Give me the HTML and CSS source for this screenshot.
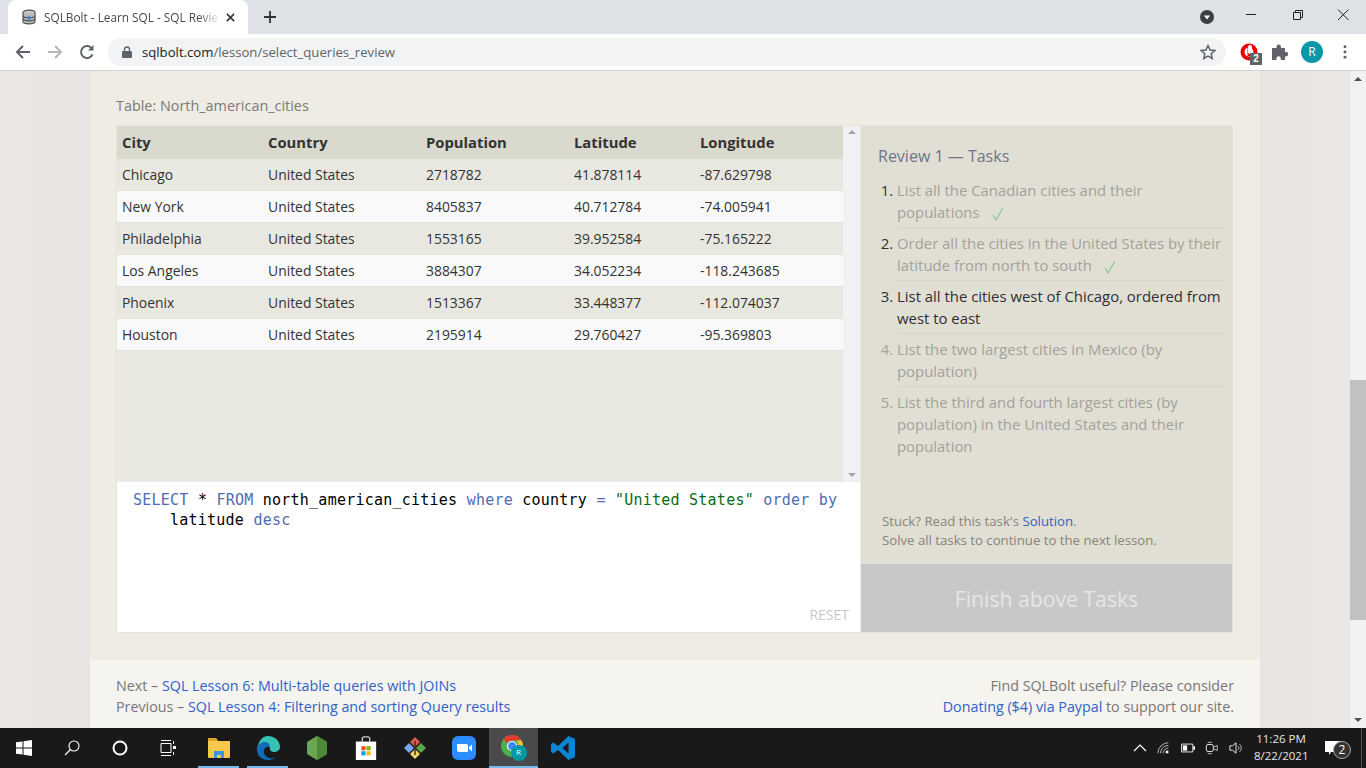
FILE: index.html
```html
<!DOCTYPE html>
<html>
<head>
    <title>SQLBolt - Learn SQL - SQL Review</title>
    <link rel="stylesheet" href="styles.css">
</head>
<body>
    <div class="tabstrip">
        <div class="tab">
            <svg class="favicon" viewBox="0 0 16 16"><ellipse cx="8" cy="3.500" rx="6" ry="2.300" fill="#ccc" stroke="#555" stroke-width="1.200"/><path d="M2 3.500v9c0 1.300 2.700 2.300 6 2.300s6-1 6-2.300v-9" fill="#bbb" stroke="#555" stroke-width="1.200"/><path d="M2 6.500c0 1.300 2.700 2.300 6 2.300s6-1 6-2.300M2 9.500c0 1.300 2.700 2.300 6 2.300s6-1 6-2.300" fill="none" stroke="#555" stroke-width="1.200"/><path d="M8 6.500l2.200 2.500H9v2.500H7V9H5.800z" fill="#3f7fd6"/></svg>
            <span class="tab-title">SQLBolt - Learn SQL - SQL Review</span>
            <svg class="tab-close" viewBox="0 0 10 10"><path d="M1 1l8 8M9 1l-8 8" stroke="#333" stroke-width="1.800"/></svg>
        </div>
        <svg class="new-tab" viewBox="0 0 12 12"><path d="M6 0v12M0 6h12" stroke="#333" stroke-width="1.800"/></svg>
        <div class="tab-spacer"></div>
        <svg class="profile-drop" viewBox="0 0 14 14"><circle cx="7" cy="7" r="7" fill="#3c4043"/><path d="M3.800 5.400h6.400L7 9.400z" fill="#fff"/></svg>
        <div class="win-buttons">
            <svg viewBox="0 0 46 30"><path d="M18 14.500h10" stroke="#222"/></svg>
            <svg viewBox="0 0 46 30"><path d="M19.500 12.500h7v7h-7zM21.500 12.500v-2h7v7h-2" fill="none" stroke="#222"/></svg>
            <svg viewBox="0 0 46 30"><path d="M18 9.500l10.500 10.500M28.500 9.500l-10.500 10.500" stroke="#222"/></svg>
        </div>
    </div>
    <div class="toolbar">
        <svg class="nav-icon" viewBox="0 0 16 16"><path d="M15 8H2M8 2L2 8l6 6" fill="none" stroke="#5f6368" stroke-width="2"/></svg>
        <svg class="nav-icon" viewBox="0 0 16 16"><path d="M1 8h13M8 2l6 6-6 6" fill="none" stroke="#b4b7bb" stroke-width="2"/></svg>
        <svg class="nav-icon" viewBox="0 0 16 16"><path d="M13.500 10.500A6 6 0 1 1 12.300 3.800" fill="none" stroke="#5f6368" stroke-width="2"/><path d="M14.500 1v5.500H9z" fill="#5f6368"/></svg>
        <div class="omnibox">
            <svg class="lock" viewBox="0 0 10 12"><path d="M2.500 5V3.500a2.500 2.500 0 0 1 5 0V5" fill="none" stroke="#5f6368" stroke-width="1.300"/><rect y="5" width="10" height="7" rx="1" fill="#5f6368"/></svg>
            <span class="url"><b>sqlbolt.com</b>/lesson/select_queries_review</span>
            <svg class="star" viewBox="0 0 16 16"><path d="M8 1.500l2 4.500 4.800.5-3.600 3.200 1 4.800L8 12.100l-4.200 2.400 1-4.800L1.200 6.500 6 6z" fill="none" stroke="#5f6368" stroke-width="1.500"/></svg>
        </div>
        <div class="ext-adblock">
            <svg viewBox="0 0 18 18"><circle cx="9" cy="9" r="6.500" fill="#fff" stroke="#e00" stroke-width="4"/><path d="M7.500 13V5a1.300 1.300 0 0 1 2.600 0v8z" fill="#e00"/><rect x="8" y="2" width="4" height="9" rx="2" fill="#fff"/></svg>
            <span class="ext-badge">2</span>
        </div>
        <svg class="ext-puzzle" viewBox="0 0 16 16"><path d="M0 4h4.500V2.800a2.200 2.200 0 1 1 4.400 0V4H13v4h1a2.200 2.200 0 1 1 0 4.400h-1V16H8.800v-1.500a2.200 2.200 0 1 0-4.400 0V16H0z" fill="#5f6368"/></svg>
        <span class="avatar">R</span>
        <svg class="menu-dots" viewBox="0 0 4 16"><circle cx="2" cy="2" r="1.700" fill="#5f6368"/><circle cx="2" cy="8" r="1.700" fill="#5f6368"/><circle cx="2" cy="14" r="1.700" fill="#5f6368"/></svg>
    </div>

    <div class="viewport">
        <div class="page">
            <div class="sheet">
                <div class="lesson">
                    <div class="table-label">Table: North_american_cities</div>
                    <div class="exercise">
                        <div class="left-col">
                            <div class="table-pane">
                                <div class="table-scroll">
                                    <table class="results">
                                        <tr><th class="c1">City</th><th class="c2">Country</th><th class="c3">Population</th><th class="c4">Latitude</th><th>Longitude</th></tr>
                                        <tr><td>Chicago</td><td>United States</td><td>2718782</td><td>41.878114</td><td>-87.629798</td></tr>
                                        <tr><td>New York</td><td>United States</td><td>8405837</td><td>40.712784</td><td>-74.005941</td></tr>
                                        <tr><td>Philadelphia</td><td>United States</td><td>1553165</td><td>39.952584</td><td>-75.165222</td></tr>
                                        <tr><td>Los Angeles</td><td>United States</td><td>3884307</td><td>34.052234</td><td>-118.243685</td></tr>
                                        <tr><td>Phoenix</td><td>United States</td><td>1513367</td><td>33.448377</td><td>-112.074037</td></tr>
                                        <tr><td>Houston</td><td>United States</td><td>2195914</td><td>29.760427</td><td>-95.369803</td></tr>
                                    </table>
                                </div>
                                <div class="pane-scrollbar">
                                    <span class="arrow-up"></span>
                                    <span class="arrow-down"></span>
                                </div>
                            </div>
                            <div class="editor">
                                <div class="code"><span class="kw">SELECT</span> * <span class="kw">FROM</span> north_american_cities <span class="kw">where</span> country <span class="kw">=</span> <span class="str">"United States"</span> <span class="kw">order by</span></div>
                                <div class="code code-indent">latitude <span class="kw">desc</span></div>
                                <div class="reset">RESET</div>
                            </div>
                        </div>
                        <div class="right-col">
                            <div class="task-title">Review 1 — Tasks</div>
                            <ol class="tasks">
                                <li class="done"><span>List all the Canadian cities and their populations</span><svg class="check" viewBox="0 0 12 14"><path d="M1 8l3 5L11 1" fill="none" stroke="#8ccb92" stroke-width="1.300"/></svg></li>
                                <li class="done"><span>Order all the cities in the United States by their latitude from north to south</span><svg class="check" viewBox="0 0 12 14"><path d="M1 8l3 5L11 1" fill="none" stroke="#8ccb92" stroke-width="1.300"/></svg></li>
                                <li><span>List all the cities west of Chicago, ordered from west to east</span></li>
                                <li class="todo"><span>List the two largest cities in Mexico (by population)</span></li>
                                <li class="todo"><span>List the third and fourth largest cities (by population) in the United States and their population</span></li>
                            </ol>
                            <div class="hint">
                                <div>Stuck? Read this task's <a>Solution</a>.</div>
                                <div>Solve all tasks to continue to the next lesson.</div>
                            </div>
                            <div class="finish">Finish above Tasks</div>
                        </div>
                    </div>
                </div>
                <div class="footer">
                    <div>
                        <div>Next – <a>SQL Lesson 6: Multi-table queries with JOINs</a></div>
                        <div>Previous – <a>SQL Lesson 4: Filtering and sorting Query results</a></div>
                    </div>
                    <div class="footer-right">
                        <div>Find SQLBolt useful? Please consider</div>
                        <div><a>Donating ($4) via Paypal</a> to support our site.</div>
                    </div>
                </div>
            </div>
        </div>
        <div class="page-scrollbar">
            <span class="arrow-up dark"></span>
            <div class="thumb"></div>
            <span class="arrow-down dark"></span>
        </div>
    </div>

    <div class="taskbar">
        <div class="tb-cell small"><svg viewBox="0 0 16 16"><path d="M0 2.300L6.500 1.400V7.500H0zM7.500 1.200L16 0V7.500H7.500zM0 8.500H6.500V14.600L0 13.700zM7.500 8.500H16V16L7.500 14.800z" fill="#fff"/></svg></div>
        <div class="tb-cell small"><svg viewBox="0 0 16 16"><circle cx="10" cy="6" r="5" fill="none" stroke="#fff" stroke-width="1.100"/><path d="M6.500 9.500L1 15" stroke="#fff" stroke-width="1.300"/></svg></div>
        <div class="tb-cell small"><svg viewBox="0 0 16 16"><circle cx="8" cy="8" r="6.500" fill="none" stroke="#fff" stroke-width="2"/></svg></div>
        <div class="tb-cell small"><svg viewBox="0 0 16 16"><path d="M1 .5h10M1 15.500h10M1 3.500h10v9H1z" fill="none" stroke="#fff"/><path d="M13.500 1v3M13.500 12v3" stroke="#fff"/><rect x="13" y="6" width="3" height="3" fill="#fff"/></svg></div>
        <div class="tb-cell wide open first-app"><svg viewBox="0 0 24 22"><path d="M1 1h8l2 3h12v16a1 1 0 0 1-1 1H2a1 1 0 0 1-1-1z" fill="#f6c84c"/><path d="M1 1h8l2 3H1z" fill="#dfa526"/><path d="M7 21v-7h10v7h-3v-3h-4v3z" fill="#3a96dd"/></svg></div>
        <div class="tb-cell wide open"><svg viewBox="0 0 24 24"><path d="M12 0c7 0 12 5 12 11 0 3-3 5-6 5-3 0-4-2-4-3 0-3-2-5-5-5-4 0-7 3-8 6C2 6 6 0 12 0z" fill="#36c3b5"/><path d="M1 14c0-5 4-8 8-8 3 0 5 2 5 5-4-1-7 2-6 6 1 4 6 7 12 4-2 2-5 3-8 3C6 24 1 20 1 14z" fill="#0f6cbd"/></svg></div>
        <div class="tb-cell wide"><svg viewBox="0 0 22 24"><path d="M11 0l10 6v12l-10 6-10-6V6z" fill="#6aa84f"/><path d="M11 0l10 6v12l-10 6z" fill="#4d8a3a"/></svg></div>
        <div class="tb-cell wide"><svg viewBox="0 0 24 26"><path d="M8 6V3a2 2 0 0 1 2-2h4a2 2 0 0 1 2 2v3" fill="none" stroke="#ccc" stroke-width="1.500"/><rect x="1" y="6" width="22" height="20" fill="#fff"/><rect x="7" y="11" width="4.500" height="4.500" fill="#f25022"/><rect x="12.500" y="11" width="4.500" height="4.500" fill="#7fba00"/><rect x="7" y="16.500" width="4.500" height="4.500" fill="#00a4ef"/><rect x="12.500" y="16.500" width="4.500" height="4.500" fill="#ffb900"/></svg></div>
        <div class="tb-cell wide"><svg viewBox="0 0 24 24"><path d="M7 6l5-5 5 5-5 5z" fill="#e2574c"/><path d="M1 12l5-5 5 5-5 5z" fill="#7aa6f0"/><path d="M13 12l5-5 5 5-5 5z" fill="#5aa848"/><path d="M7 18l5-5 5 5-5 5z" fill="#f3d66b"/><path d="M12 5v14" stroke="#333" stroke-width="1.500"/></svg></div>
        <div class="tb-cell wide"><svg viewBox="0 0 24 24"><rect width="24" height="24" rx="6" fill="#2d8cff"/><path d="M5 8h9a2 2 0 0 1 2 2v6H7a2 2 0 0 1-2-2zM17 11l3-2.500v7L17 13z" fill="#fff"/></svg></div>
        <div class="tb-cell chrome-cell open"><svg viewBox="0 0 28 28"><circle cx="12" cy="12" r="11" fill="#4caf50"/><path d="M12 1a11 11 0 0 1 9.500 5.500H12a5.500 5.500 0 0 0-5 3L3.500 5A11 11 0 0 1 12 1z" fill="#e33b2e"/><path d="M21.500 6.500A11 11 0 0 1 12 23l4.500-8a5.500 5.500 0 0 0 0-8.500z" fill="#fbc02d"/><circle cx="12" cy="12" r="4.500" fill="#4285f4" stroke="#fff" stroke-width="1.200"/><circle cx="19" cy="19" r="8" fill="#0097a7"/></svg><span class="chrome-r">R</span></div>
        <div class="tb-cell wide"><svg viewBox="0 0 24 24"><path d="M17.500 0L24 3v18l-6.500 3L7 14l-4.500 3.500L0 16v-8l2.500-1.500L7 10zM17.500 6.500L11.500 12l6 5.500z" fill="#0a84d6"/></svg></div>
        <div class="tb-spacer"></div>
        <div class="tray">
            <svg class="tray-icon" viewBox="0 0 14 8"><path d="M1 7l6-6 6 6" fill="none" stroke="#fff" stroke-width="1.200"/></svg>
            <svg class="tray-icon" viewBox="0 0 16 14"><path d="M1 13A12 12 0 0 1 13 1M4 13a9 9 0 0 1 9-9M7 13a6 6 0 0 1 6-6" fill="none" stroke="#ccc"/><rect x="10" y="10" width="3" height="3" fill="#fff"/></svg>
            <svg class="tray-icon" viewBox="0 0 16 10"><path d="M.5.500h13v9H.5z" fill="none" stroke="#fff"/><rect x="2" y="2" width="5" height="6" fill="#fff"/><rect x="14" y="3" width="2" height="4" fill="#fff"/></svg>
            <svg class="tray-icon" viewBox="0 0 14 16"><rect x=".5" y="4" width="8" height="8" rx="2" fill="none" stroke="#fff"/><path d="M9 7l4-2v6l-4-2M2 1.500h5M2 14.500h5" fill="none" stroke="#ccc"/></svg>
            <svg class="tray-icon" viewBox="0 0 16 14"><path d="M1 4.500h3L8 1v12L4 9.500H1z" fill="none" stroke="#fff"/><path d="M10 4.500a3 3 0 0 1 0 5M12 2.500a6 6 0 0 1 0 9" fill="none" stroke="#bbb"/></svg>
        </div>
        <div class="clock"><div>11:26 PM</div><div>8/22/2021</div></div>
        <div class="notify">
            <svg viewBox="0 0 16 14"><path d="M0 0h16v11H6l-2 3v-3H0z" fill="#fff"/></svg>
            <span class="notify-count">2</span>
        </div>
        <div class="show-desktop"></div>
    </div>
</body>
</html>
```

FILE: styles.css
```css
body {
    margin: 0;
    height: 768px;
    overflow: hidden;
    display: flex;
    flex-direction: column;
    font-family: "Open Sans", sans-serif;
}
a {
    color: #2f62c9;
}

/* browser */
.tabstrip {
    height: 34px;
    flex: none;
    display: flex;
    align-items: center;
    background-color: #dee1e6;
}
.tab {
    width: 240px;
    height: 34px;
    margin-left: 8px;
    padding: 0 0 0 13px;
    box-sizing: border-box;
    border-radius: 8px 8px 0 0;
    background-color: #fff;
    display: flex;
    align-items: center;
    flex: none;
}
.favicon {
    width: 16px;
    height: 16px;
    flex: none;
}
.tab-title {
    width: 176px;
    margin-left: 7px;
    font: 11.800px "Open Sans", sans-serif;
    color: #45494d;
    white-space: nowrap;
    overflow: hidden;
    -webkit-mask-image: linear-gradient(90deg, #000 88%, transparent 100%);
    mask-image: linear-gradient(90deg, #000 88%, transparent 100%);
}
.tab-close {
    width: 9px;
    height: 9px;
    margin-left: 6px;
    flex: none;
}
.new-tab {
    width: 12px;
    height: 12px;
    margin-left: 16px;
    flex: none;
}
.tab-spacer {
    flex: 1;
}
.profile-drop {
    width: 14px;
    height: 14px;
    flex: none;
}
.win-buttons {
    margin-left: 14px;
    align-self: flex-start;
    display: flex;
}
.win-buttons svg {
    width: 46px;
    height: 30px;
}
.toolbar {
    height: 37px;
    flex: none;
    box-sizing: border-box;
    background-color: #fff;
    border-bottom: 1px solid #d2d2d0;
    display: flex;
    align-items: center;
    padding-left: 15px;
}
.nav-icon {
    width: 16px;
    height: 16px;
    margin-right: 16px;
    flex: none;
}
.omnibox {
    width: 1118px;
    height: 28px;
    margin-left: -3px;
    margin-right: 14px;
    padding: 0 10px 0 14px;
    box-sizing: border-box;
    border-radius: 14px;
    background-color: #f1f3f4;
    display: flex;
    align-items: center;
    flex: none;
}
.lock {
    width: 10px;
    height: 12px;
    flex: none;
}
.url {
    margin-left: 10px;
    flex: 1;
    font-size: 13.150px;
    color: #5f6368;
}
.url b {
    font-weight: normal;
    color: #202124;
}
.star {
    width: 16px;
    height: 16px;
}
.ext-adblock {
    position: relative;
    width: 18px;
    height: 18px;
    flex: none;
}
.ext-adblock svg {
    width: 18px;
    height: 18px;
}
.ext-badge {
    position: absolute;
    left: 10px;
    top: 10px;
    width: 12px;
    height: 12px;
    background-color: #5f6368;
    color: #fff;
    font: bold 10px/12px "Liberation Sans", sans-serif;
    text-align: center;
}
.ext-puzzle {
    width: 16px;
    height: 16px;
    margin-left: 14px;
    flex: none;
}
.avatar {
    width: 22px;
    height: 22px;
    margin-left: 13px;
    border-radius: 50%;
    background-color: #0a97a8;
    color: #fff;
    font-size: 12px;
    line-height: 22px;
    text-align: center;
    flex: none;
}
.menu-dots {
    width: 4px;
    height: 14px;
    margin-left: 20px;
    flex: none;
}

/* page */
.viewport {
    height: 657px;
    flex: none;
    display: flex;
}
.page {
    flex: 1;
    padding-left: 90px;
    background: linear-gradient(90deg, #ebe7e4 0, #e8e4e1 90px, #e8e4e1 1260px, #ebe7e5 100%);
}
.sheet {
    width: 1170px;
    height: 657px;
    background-color: #f5f4ef;
}
.lesson {
    height: 589px;
    padding: 25px 27px 0 26px;
    box-sizing: border-box;
    background-color: #efece4;
    border-radius: 0 0 5px 5px;
}
.table-label {
    font-size: 14.400px;
    line-height: 20px;
    color: #7b7b78;
    margin-bottom: 9px;
}
.exercise {
    height: 508px;
    display: flex;
    box-sizing: border-box;
    border: 1px solid #e6e4da;
}
.left-col {
    width: 743px;
    flex: none;
    display: flex;
    flex-direction: column;
}
.table-pane {
    height: 355px;
    flex: none;
    display: flex;
    background-color: #eae9e1;
}
.table-scroll {
    flex: 1;
}
.pane-scrollbar {
    width: 17px;
    padding: 4px 0;
    box-sizing: border-box;
    background-color: #f1f1f1;
    display: flex;
    flex-direction: column;
    justify-content: space-between;
    align-items: center;
}
.arrow-up {
    width: 0;
    height: 0;
    border-left: 4px solid transparent;
    border-right: 4px solid transparent;
    border-bottom: 4px solid #a3a3a3;
}
.arrow-down {
    width: 0;
    height: 0;
    border-left: 4px solid transparent;
    border-right: 4px solid transparent;
    border-top: 4px solid #a3a3a3;
}
.arrow-up.dark {
    border-bottom-color: #505050;
}
.arrow-down.dark {
    border-top-color: #505050;
}
.results {
    width: 100%;
    border-collapse: collapse;
    table-layout: fixed;
    font-size: 13.900px;
    color: #333;
}
.results th {
    height: 31px;
    padding: 0 0 2px 5px;
    text-align: left;
    font-size: 14.800px;
    background-color: #d9d9ce;
}
.results td {
    height: 31px;
    padding: 0 0 0 5px;
    border-bottom: 1px solid #e3e3dc;
    background-color: #e9e8e0;
}
.results tr:nth-child(odd) td {
    background-color: #f9f9f9;
}
.c1 {
    width: 141px;
}
.c2 {
    width: 153px;
}
.c3 {
    width: 143px;
}
.c4 {
    width: 121px;
}
.editor {
    flex: 1;
    margin-top: 1px;
    padding: 8px 0 0 16px;
    background-color: #fff;
    display: flex;
    flex-direction: column;
}
.code {
    font: 15px/20px "DejaVu Sans Mono", monospace;
    letter-spacing: .235px;
    color: #000;
    white-space: pre;
}
.code-indent {
    padding-left: 37px;
}
.kw {
    color: #4f6cb5;
}
.str {
    color: #0a6b13;
}
.reset {
    margin-top: auto;
    padding: 0 11px 7px 0;
    text-align: right;
    font-size: 14px;
    line-height: 20px;
    color: #c9c9c9;
}
.right-col {
    flex: 1;
    margin-left: 1px;
    display: flex;
    flex-direction: column;
    background-color: #e1dfd3;
}
.task-title {
    margin: 19px 0 0 17px;
    font-size: 16px;
    line-height: 22px;
    color: #6d7588;
}
.tasks {
    margin: 8px 7px 0 36px;
    padding: 0;
    font-size: 14.900px;
    line-height: 22px;
    color: #2f2f36;
}
.tasks li {
    padding: 4px 0;
    border-bottom: 1px solid #d7d5c9;
}
.tasks li:last-child {
    border-bottom: none;
}
.done span,
.todo span,
.todo {
    color: #a3a29b;
}
.check {
    width: 12px;
    height: 14px;
    margin-left: 12px;
    vertical-align: -3px;
}
.hint {
    margin: auto 0 14px 21px;
    font-size: 13.200px;
    line-height: 19px;
    color: #86847d;
}
.finish {
    height: 68px;
    flex: none;
    background-color: #c8c8c8;
    color: #e6e6e6;
    font-size: 21.200px;
    line-height: 70px;
    text-align: center;
}
.footer {
    padding: 15px 26px 0;
    display: flex;
    justify-content: space-between;
    font-size: 14.300px;
    line-height: 21px;
    color: #777;
}
.footer-right {
    text-align: right;
}
.page-scrollbar {
    width: 16px;
    flex: none;
    padding: 6px 0;
    box-sizing: border-box;
    background-color: #f1f1f1;
    display: flex;
    flex-direction: column;
    align-items: center;
}
.thumb {
    width: 100%;
    height: 240px;
    margin-top: 299px;
    margin-bottom: auto;
    background-color: #c1c1c1;
}

/* windows taskbar */
.taskbar {
    height: 40px;
    flex: none;
    background-color: #191919;
    display: flex;
}
.tb-cell {
    box-sizing: border-box;
    display: flex;
    align-items: center;
    justify-content: center;
    flex: none;
    position: relative;
}
.tb-cell.small {
    width: 48px;
}
.tb-cell.small svg {
    width: 16px;
    height: 16px;
}
.tb-cell.wide {
    width: 49px;
}
.tb-cell.wide svg {
    width: 24px;
    height: 24px;
}
.tb-cell.first-app {
    margin-left: 2px;
}
.tb-cell.open::after {
    content: "";
    position: absolute;
    left: 0;
    right: 0;
    bottom: 0;
    height: 2px;
    background-color: #76b9ed;
}
.tb-cell.wide.open::after {
    left: 4px;
    right: 4px;
}
.chrome-cell {
    width: 49px;
    margin-left: 1px;
    background-color: #4a4a4a;
}
.chrome-cell svg {
    width: 28px;
    height: 28px;
}
.chrome-r {
    position: absolute;
    left: 27px;
    top: 19px;
    font-size: 8px;
    line-height: 10px;
    color: #fff;
}
.tb-spacer {
    flex: 1;
}
.tray {
    display: flex;
    align-items: center;
}
.tray-icon {
    width: 14px;
    height: 14px;
    margin-right: 10px;
}
.clock {
    width: 54px;
    margin-left: 1px;
    padding-top: 2px;
    font-size: 11.500px;
    line-height: 17px;
    text-align: center;
    white-space: nowrap;
    color: #e6e6e6;
}
.notify {
    position: relative;
    width: 40px;
    margin: 0 8px 0 5px;
    display: flex;
    align-items: center;
    justify-content: center;
}
.notify svg {
    width: 16px;
    height: 14px;
}
.notify-count {
    position: absolute;
    left: 20px;
    top: 13px;
    width: 16px;
    height: 16px;
    border: 1px solid #aaa;
    border-radius: 50%;
    background-color: #333;
    color: #fff;
    font-size: 12px;
    line-height: 16px;
    text-align: center;
}
.show-desktop {
    width: 4px;
    border-left: 1px solid #555;
}
```
